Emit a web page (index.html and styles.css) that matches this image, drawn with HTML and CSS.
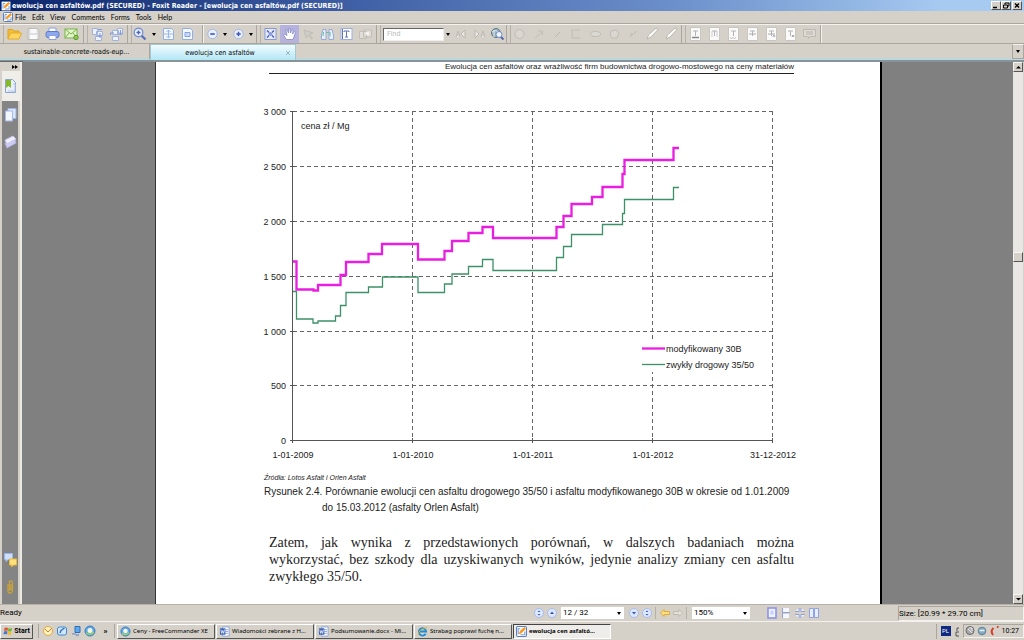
FILE: index.html
```html
<!DOCTYPE html>
<html lang="pl">
<head>
<meta charset="utf-8">
<title>ewolucja cen asfaltów.pdf (SECURED) - Foxit Reader</title>
<link rel="stylesheet" href="styles.css">
</head>
<body>
<svg class="defs" aria-hidden="true">
  <symbol id="foxit" viewBox="0 0 10 10"><rect x=".5" y=".5" width="9" height="9" rx="1" fill="#fff" stroke="#5f7fc0"/><path d="M2 7.500V2.500h2M4 8h4V5" fill="none" stroke="#7d9fdc"/><path d="M2.500 7.500l1-3 4-3.500 1.500 1.500-4 4z" fill="#f59a23"/></symbol>
  <symbol id="folder" viewBox="0 0 15 14"><path d="M1 12V2.500h4.500L7 4h5v2" fill="#f0bf3c" stroke="#dfa21d"/><path d="M1 12L3.500 6H14.500L12 12z" fill="#ffd75e" stroke="#e5aa28"/></symbol>
  <symbol id="save" viewBox="0 0 15 14"><path d="M2 1.500h9l2 2v9H2z" fill="#dedede" stroke="#bdbdbd"/><path d="M4.500 2h6v4h-6zM4 8h7v4H4z" fill="#fafafa"/></symbol>
  <symbol id="print" viewBox="0 0 15 14"><path d="M4 1h7v4H4z" fill="#fff" stroke="#8aa0e0"/><rect x="1" y="4.500" width="13" height="6" rx="2" fill="#8ca8ee" stroke="#5c79cf"/><path d="M4 8.500h7v4H4z" fill="#fff" stroke="#8aa0e0"/></symbol>
  <symbol id="mail" viewBox="0 0 15 14"><rect x="1" y="2" width="12" height="9" fill="#e3f4cc" stroke="#78b348"/><path d="M1 2l6 5 6-5M1 11l4-5M13 11L9 6" fill="none" stroke="#78b348"/><circle cx="12" cy="10.500" r="2.200" fill="#8fc84f" stroke="#5e9a31"/></symbol>
  <symbol id="docs1" viewBox="0 0 15 14"><path d="M2.500 1.500h5v6h-5zM6.500 4.500h6v4h-6zM5.500 9.500h6v4h-6z" fill="#eef2fd" stroke="#a2b2de"/><path d="M8 2.500h4M10 6v4M8.500 8.500l1.500 2 1.500-2" fill="none" stroke="#8299d8"/></symbol>
  <symbol id="docs2" viewBox="0 0 15 14"><path d="M8.500 1.500h5v6h-5zM3.500 3.500h6v4h-6zM3.500 9.500h6v4h-6z" fill="#eef2fd" stroke="#a2b2de"/><path d="M1.500 8V6H5M11.500 3v4M10 5.500l1.500 2 1.500-2" fill="none" stroke="#8299d8"/></symbol>
  <symbol id="zoom" viewBox="0 0 15 14"><path d="M9 8l4.500 4.500" stroke="#5b6fb8" stroke-width="2.200"/><circle cx="6.500" cy="5.500" r="4.300" fill="#eef5ff" stroke="#7b93d6" stroke-width="1.400"/><path d="M6.500 3.500v4M4.500 5.500h4" stroke="#4a63b8" stroke-width="1.400"/></symbol>
  <symbol id="pageA" viewBox="0 0 15 14"><path d="M2.500 1.500h8l2 2v9h-10z" fill="#f3f8ff" stroke="#93aee3"/><path d="M7.500 3v8M5.500 5l2-2 2 2M5.500 9l2 2 2-2M3 7h9" fill="none" stroke="#9ab4e8"/></symbol>
  <symbol id="pageB" viewBox="0 0 15 14"><path d="M2.500 1.500h8l2 2v9h-10z" fill="#f3f8ff" stroke="#93aee3"/><path d="M5 5.500h5v4H5z" fill="#c9daf8" stroke="#86a2de"/></symbol>
  <symbol id="minus" viewBox="0 0 15 14"><circle cx="7.500" cy="7" r="4.700" fill="#e9f0ff" stroke="#a3b5e4"/><path d="M5.300 7h4.400" stroke="#4054b4" stroke-width="1.600"/></symbol>
  <symbol id="plus" viewBox="0 0 15 14"><circle cx="7.500" cy="7" r="4.700" fill="#e9f0ff" stroke="#a3b5e4"/><path d="M5.300 7h4.400M7.500 4.800v4.400" stroke="#4054b4" stroke-width="1.500"/></symbol>
  <symbol id="fit" viewBox="0 0 15 14"><rect x="2" y="1.500" width="11" height="11" fill="#e6ebfc" stroke="#8a99d6"/><path d="M4 3.500l2 2M11 3.500l-2 2M4 10.500l2-2M11 10.500l-2-2" stroke="#4a5cae" stroke-width="1.300"/><circle cx="7.500" cy="7" r="2" fill="#8b9be0"/></symbol>
  <symbol id="hand" viewBox="0 0 15 14"><path d="M4.500 12.500L1.500 8l1-1L5 8.500 3.800 3l1.200-.5L6.500 6 6.700 1.500h1.300L8.500 6l1.500-4 1.200.5L10.500 7l2-2.500 1 .8L11 12.500z" fill="#fff" stroke="#8588c8" stroke-width=".8"/></symbol>
  <symbol id="arrow" viewBox="0 0 15 14"><path d="M3 3l9 3-3.500 1.500 3 4-1 .8-3-4L5 11z" fill="#cfccc5" stroke="#c1bdb6"/></symbol>
  <symbol id="binoc" viewBox="0 0 15 14"><path d="M3 2.500h3v10H1.500V8zM9 2.500h3L13.500 8v4.500H9z" fill="#e4efff" stroke="#96aada"/><path d="M3.500 5L3 9M10 5v4M6 5.500h3" stroke="#6dbd9d"/></symbol>
  <symbol id="textsel" viewBox="0 0 15 14"><rect x="2" y="1.500" width="11" height="11" fill="#fff" stroke="#9dafe4"/><path d="M5 5V4h5v1M7.500 4v6M6 10h3M3.500 2v10" fill="none" stroke="#6473b4"/></symbol>
  <symbol id="camera" viewBox="0 0 15 14"><path d="M1.500 4.500h7v7h-7zM5.500 3h8v7h-8z" fill="#e1ded8" stroke="#c2beb7"/><circle cx="9.500" cy="6.500" r="1.800" fill="#f4f3f0"/></symbol>
  <symbol id="prev" viewBox="0 0 15 14"><path d="M2 10l2-6 2 6M2.500 8h3M11 3v8L7 7z" fill="#eae8e4" stroke="#bdb9b1"/></symbol>
  <symbol id="next" viewBox="0 0 15 14"><path d="M9 10l2-6 2 6M9.500 8h3M3 3v8l4-4z" fill="#eae8e4" stroke="#bdb9b1"/></symbol>
  <symbol id="search" viewBox="0 0 15 14"><circle cx="6" cy="6" r="4.500" fill="#9cb2bd" stroke="#5e7785"/><path d="M2 5q3-3 7 0M4 10V3" stroke="#dfeaf0" fill="none"/><path d="M10.500 9.500l3 3" stroke="#5269b0" stroke-width="2"/><circle cx="9" cy="7.500" r="3" fill="#f0f6ff" stroke="#6f8ac8"/></symbol>
  <symbol id="gcirc" viewBox="0 0 15 14"><circle cx="7.500" cy="7" r="4.500" fill="#dad7d0" stroke="#c0bcb4"/></symbol>
  <symbol id="garrow" viewBox="0 0 15 14"><path d="M4 11l7-6M7 4h4.500v4" fill="none" stroke="#c2beb6"/></symbol>
  <symbol id="gline" viewBox="0 0 15 14"><path d="M5 10l5-5" stroke="#bcb8b0"/></symbol>
  <symbol id="grect" viewBox="0 0 15 14"><path d="M11 3H3v8h8" fill="none" stroke="#c0bcb4"/></symbol>
  <symbol id="gell" viewBox="0 0 15 14"><ellipse cx="7.500" cy="7" rx="5" ry="2.500" fill="#dcd9d3" stroke="#c0bcb4"/></symbol>
  <symbol id="gpoly" viewBox="0 0 15 14"><path d="M4 4l5-1 3 3-2 5H5L3 8z" fill="#dad7d0" stroke="#c0bcb4"/></symbol>
  <symbol id="gwave" viewBox="0 0 15 14"><path d="M4 10l3-3H4M8 7l3-3" fill="none" stroke="#bcb8b0"/></symbol>
  <symbol id="pencil" viewBox="0 0 15 14"><path d="M2 12l1.500-4L11 1l2 1.500L6 10z" fill="#fbfbfa" stroke="#bab6af"/></symbol>
  <symbol id="tpage" viewBox="0 0 15 14"><path d="M2.500 .5h10v13h-10z" fill="#fafafa" stroke="#c9c6c0"/><path d="M5 4h5M7.500 4v5" stroke="#b4b4b4"/></symbol>
  <symbol id="note" viewBox="0 0 15 14"><path d="M1.500 2.500h12v7h-5l-2 2v-2h-5z" fill="#dedbd5" stroke="#bdb9b1"/><path d="M4 5h7M4 7h7" stroke="#b8b4ac"/></symbol>
  <symbol id="word" viewBox="0 0 12 12"><path d="M4 1h7v10H4z" fill="#fff" stroke="#8aa3d8"/><path d="M7 4h3M7 6h3M7 8h3" stroke="#8aa3d8"/><path d="M1 2.500h6v7H1z" fill="#3e64b8"/><path d="M2 4l1 4 1-3 1 3 1-4" fill="none" stroke="#fff" stroke-width=".8"/></symbol>
  <symbol id="commander" viewBox="0 0 12 12"><circle cx="6" cy="6" r="5" fill="#5ea7e8" stroke="#3b7cc6"/><path d="M2 8q4 3 8-1" fill="none" stroke="#9fd35b" stroke-width="1.500"/><circle cx="6" cy="5.500" r="2.500" fill="#f4f8e0"/></symbol>
  <symbol id="ie" viewBox="0 0 12 12"><path d="M9.500 8.500A4 4 0 1 1 10 6H3" fill="none" stroke="#1c8bd8" stroke-width="2"/><path d="M1 10Q2 3 11 1.500" fill="none" stroke="#efb31f"/></symbol>
  <symbol id="ends" viewBox="0 0 12 12"><circle cx="6" cy="6" r="4.500" fill="#dce8ff" stroke="#a9bcec"/><path d="M4.500 5L6 3.500 7.500 5zM4.500 7L6 8.500 7.500 7z" fill="#3c56b8"/></symbol>
  <symbol id="up" viewBox="0 0 12 12"><circle cx="6" cy="6" r="4.500" fill="#dce8ff" stroke="#a9bcec"/><path d="M4 7l2-2.500L8 7z" fill="#3c56b8"/></symbol>
  <symbol id="down" viewBox="0 0 12 12"><circle cx="6" cy="6" r="4.500" fill="#dce8ff" stroke="#a9bcec"/><path d="M4 5l2 2.500L8 5z" fill="#3c56b8"/></symbol>
</svg>

<header class="titlebar">
  <svg class="ic10"><use href="#foxit"/></svg>
  <h1 class="title">ewolucja cen asfaltów.pdf (SECURED) - Foxit Reader - [ewolucja cen asfaltów.pdf (SECURED)]</h1>
  <button class="winbtn" aria-label="Minimize"><svg viewBox="0 0 8 7"><path d="M1 5.500h4" stroke="#000" stroke-width="1.500"/></svg></button>
  <button class="winbtn" aria-label="Restore"><svg viewBox="0 0 8 7"><path d="M3 2.500v-1.500h4v3H5.500M1.500 3h4v3h-4z" fill="none" stroke="#000"/></svg></button>
  <button class="winbtn last" aria-label="Close"><svg viewBox="0 0 8 7"><path d="M2 1.500l4 4M6 1.500l-4 4" stroke="#000" stroke-width="1.300"/></svg></button>
</header>

<nav class="menubar">
  <svg class="ic10"><use href="#foxit"/></svg>
  <button>File</button><button>Edit</button><button>View</button><button>Comments</button><button>Forms</button><button>Tools</button><button>Help</button>
</nav>

<div class="toolbar">
  <div class="group">
    <button class="tool" aria-label="Open"><svg><use href="#folder"/></svg></button><button class="tool" aria-label="Save"><svg><use href="#save"/></svg></button><button class="tool" aria-label="Print"><svg><use href="#print"/></svg></button><button class="tool" aria-label="Email"><svg><use href="#mail"/></svg></button>
  </div>
  <div class="group">
    <button class="tool" aria-label="Rotate left"><svg><use href="#docs1"/></svg></button><button class="tool" aria-label="Rotate right"><svg><use href="#docs2"/></svg></button>
  </div>
  <div class="group wide">
    <button class="tool" aria-label="Zoom"><svg><use href="#zoom"/></svg></button><button class="drop" aria-label="Zoom options"></button><button class="tool" aria-label="Fit page"><svg><use href="#pageA"/></svg></button><button class="tool" aria-label="Actual size"><svg><use href="#pageB"/></svg></button>
  </div>
  <div class="group plain">
    <button class="tool slim" aria-label="Zoom out"><svg><use href="#minus"/></svg></button><button class="drop" aria-label="Zoom out options"></button><button class="tool slim" aria-label="Zoom in"><svg><use href="#plus"/></svg></button><button class="drop" aria-label="Zoom in options"></button>
  </div>
  <div class="group">
    <button class="tool" aria-label="Full screen"><svg><use href="#fit"/></svg></button><button class="tool active" aria-label="Hand"><svg><use href="#hand"/></svg></button><button class="tool" aria-label="Select"><svg><use href="#arrow"/></svg></button><button class="tool" aria-label="Search panel"><svg><use href="#binoc"/></svg></button><button class="tool" aria-label="Select text"><svg><use href="#textsel"/></svg></button><button class="tool" aria-label="Snapshot"><svg><use href="#camera"/></svg></button>
  </div>
  <div class="group finder">
    <input class="find" type="text" placeholder="Find" aria-label="Find"><button class="drop" aria-label="Find options"></button><button class="tool mid" aria-label="Find previous"><svg><use href="#prev"/></svg></button><button class="tool mid" aria-label="Find next"><svg><use href="#next"/></svg></button><button class="tool mid" aria-label="Search"><svg><use href="#search"/></svg></button>
  </div>
  <div class="group drawing">
    <button class="tool" aria-label="Cloud"><svg><use href="#gcirc"/></svg></button><button class="tool" aria-label="Arrow"><svg><use href="#garrow"/></svg></button><button class="tool" aria-label="Line"><svg><use href="#gline"/></svg></button><button class="tool" aria-label="Rectangle"><svg><use href="#grect"/></svg></button><button class="tool" aria-label="Ellipse"><svg><use href="#gell"/></svg></button><button class="tool" aria-label="Polygon"><svg><use href="#gpoly"/></svg></button><button class="tool" aria-label="Polyline"><svg><use href="#gwave"/></svg></button><button class="tool" aria-label="Pencil"><svg><use href="#pencil"/></svg></button><button class="tool" aria-label="Eraser"><svg><use href="#pencil"/></svg></button>
  </div>
  <div class="group">
    <button class="tool" aria-label="Underline"><svg viewBox="0 0 15 14"><use href="#tpage"/><path d="M4 10.500h7" stroke="#888" stroke-width="1.500"/></svg></button><button class="tool" aria-label="Highlight"><svg viewBox="0 0 15 14"><use href="#tpage"/><path d="M5 4v6M10 4v6" stroke="#ccc"/></svg></button><button class="tool" aria-label="Squiggly"><svg viewBox="0 0 15 14"><use href="#tpage"/><path d="M4 10.500l1.500 1 1.500-1 1.500 1 1.500-1" fill="none" stroke="#bbb"/></svg></button><button class="tool" aria-label="Strikeout"><svg viewBox="0 0 15 14"><use href="#tpage"/><path d="M4 7h7" stroke="#aaa"/></svg></button><button class="tool" aria-label="Replace"><svg viewBox="0 0 15 14"><use href="#tpage"/><path d="M4 7h7M9 10l1-2 1 2" fill="none" stroke="#aaa"/></svg></button><button class="tool" aria-label="Insert"><svg viewBox="0 0 15 14"><use href="#tpage"/><path d="M9 10l1-2 1 2" fill="none" stroke="#999"/></svg></button><button class="tool" aria-label="Note"><svg><use href="#note"/></svg></button>
  </div>
</div>

<div class="tabs" role="tablist">
  <button class="tab" role="tab">sustainable-concrete-roads-eup...</button>
  <button class="tab current" role="tab" aria-selected="true"><span>ewolucja cen asfaltów</span><svg viewBox="0 0 6 6"><path d="M1 1l4 4M5 1L1 5" stroke="#9bb3c0"/></svg></button>
  <button class="tablist" aria-label="Tab list"></button>
</div>

<main class="work">
  <aside class="rail">
    <div class="railhead">
      <button class="expand" aria-label="Expand"><svg viewBox="0 0 8 6"><path d="M1 1l3 2-3 2zM4 1l3 2-3 2z"/></svg></button>
      <button class="panel" aria-label="Bookmarks"><svg viewBox="0 0 13 16"><path d="M1.500 1.500h7l3 3v10h-10z" fill="#e9f0fc" stroke="#8fa5d0"/><path d="M2 2h5v8l-2.500-2L2 10z" fill="#84b92b"/><path d="M9 6h2v7H4" fill="none" stroke="#b4c6e6"/></svg></button>
    </div>
    <button class="panel" aria-label="Pages"><svg viewBox="0 0 13 16"><path d="M4 1.500h8v10H4z" fill="#dbe7ff" stroke="#9fb5e4"/><path d="M1.500 4h7v10h-7z" fill="#f2f6ff" stroke="#a5b9e4"/></svg></button>
    <button class="panel" aria-label="Layers"><svg viewBox="0 0 13 16"><path d="M1 9l10-4 1 4-9 5z" fill="#cfcdf2" stroke="#b3b0e0"/><path d="M1 6l8-4 3 3-9 5z" fill="#f0effd" stroke="#c4c2ea"/></svg></button>
    <span class="spacer"></span>
    <button class="panel" aria-label="Comments"><svg viewBox="0 0 13 16"><path d="M.5 1.500h8v6H4l-2 2v-2H.500z" fill="#cfe0ff" stroke="#9ab5ec"/><path d="M5.500 7h7v6h-3l-2 2v-2h-2z" fill="#ffe07a" stroke="#eab83a"/></svg></button>
    <button class="panel" aria-label="Attachments"><svg viewBox="0 0 13 16"><path d="M4 5v7q0 2 2 2t2.500-2V4Q8.500 2 6.500 2T5.500 4v7h1.500V5" fill="none" stroke="#c6a13c" stroke-width="1.300"/></svg></button>
  </aside>

  <section class="viewport">
    <article class="page">
      <p class="running">Ewolucja cen asfaltów oraz wrażliwość firm budownictwa drogowo-mostowego na ceny materiałów</p>
      <svg class="chart" viewBox="262 100 538 366" role="img" aria-label="Ceny asfaltu">
        <g class="grid">
          <path d="M293 111.500H773M293 166.500H773M293 221.500H773M293 276.500H773M293 331.500H773M293 385.500H773"/>
          <path d="M412.500 111V440M532.500 111V440M652.500 111V440M772.500 111V440"/>
        </g>
        <rect x="640" y="341" width="126" height="31" fill="#fff"/>
        <path class="axis" d="M292.500 111V443M290 440.500H773M290 111.500h5M290 166.500h5M290 221.500h5M290 276.500h5M290 331.500h5M290 385.500h5M412.500 438v5M532.500 438v5M652.500 438v5M772.500 438v5"/>
        <path class="basic" d="M293 291.500H296.500V319H313V323H318V321H335.500V316H340.500V305.500H346V292.500H368.500V287H382.500V277H418V292.500H444.500V284H452V274H468.500V266.500H482.500V259.500H493V270.500H556.500V257.500H563.500V246.500H571.500V234.500H602.500V224.500H622.500V213.500H624.500V199.500H673.500V187.500H679"/>
        <path class="modified" d="M293 261.500H296.500V289.500H313.500V290.500H318V285H340.500V275H346V262H368.500V254H382V244H418V259.500H444.500V251H452V241H468.500V233H482.500V227H493V238H556.500V227H563.500V216H571.500V204H592V197H602.500V187H622.500V174H624.500V160H673.500V148H679"/>
        <path class="modified" d="M642 348.500h23"/>
        <path class="basic" d="M642 364.500h23"/>
        <g class="label">
          <text x="301" y="129">cena zł / Mg</text>
          <text x="666" y="352">modyfikowany 30B</text>
          <text x="666" y="368">zwykły drogowy 35/50</text>
        </g>
        <g class="label end">
          <text x="286" y="115">3 000</text><text x="286" y="170">2 500</text><text x="286" y="225">2 000</text><text x="286" y="280">1 500</text><text x="286" y="335">1 000</text><text x="286" y="389">500</text><text x="286" y="444">0</text>
        </g>
        <g class="label middle">
          <text x="293" y="458">1-01-2009</text><text x="413" y="458">1-01-2010</text><text x="533" y="458">1-01-2011</text><text x="653" y="458">1-01-2012</text><text x="773" y="458">31-12-2012</text>
        </g>
      </svg>
      <p class="source">Źródła: Lotos Asfalt i Orlen Asfalt</p>
      <p class="caption">Rysunek 2.4. Porównanie ewolucji cen asfaltu drogowego 35/50 i asfaltu modyfikowanego 30B w okresie od 1.01.2009 <span class="cont">do 15.03.2012 (asfalty Orlen Asfalt)</span></p>
      <p class="body">Zatem, jak wynika z przedstawionych porównań, w dalszych badaniach można<br>wykorzystać, bez szkody dla uzyskiwanych wyników, jedynie analizy zmiany cen asfaltu <span class="tail">zwykłego 35/50.</span></p>
    </article>
  </section>

  <div class="scroll">
    <button class="sbtn" aria-label="Scroll up"><svg viewBox="0 0 7 6"><path d="M1 4.500h5L3.500 2z"/></svg></button>
    <span class="track"></span>
    <button class="sbtn thumb" aria-label="Scroll position"></button>
    <span class="track low"></span>
    <button class="sbtn" aria-label="Scroll down"><svg viewBox="0 0 7 6"><path d="M1 2h5L3.500 4.500z"/></svg></button>
  </div>
</main>

<footer class="status">
  <span class="ready">Ready</span>
  <div class="pager">
    <button class="nav" aria-label="First page"><svg><use href="#ends"/></svg></button><button class="nav" aria-label="Previous page"><svg><use href="#up"/></svg></button>
    <span class="pick"><select class="num" aria-label="Page"><option>12 / 32</option></select></span>
    <button class="nav" aria-label="Next page"><svg><use href="#down"/></svg></button><button class="nav" aria-label="Last page"><svg><use href="#ends"/></svg></button>
    <span class="sep"></span>
    <button class="nav" aria-label="Back"><svg viewBox="0 0 12 12"><path d="M1.500 6L5 2.500v2h5.500v3H5v2z" fill="#ffdf7e" stroke="#dfac38"/></svg></button><button class="nav" aria-label="Forward"><svg viewBox="0 0 12 12"><path d="M10.500 6L7 2.500v2H1.500v3H7v2z" fill="#e4e1db" stroke="#bebab2"/></svg></button>
    <span class="sep"></span>
    <span class="pick"><select class="pct" aria-label="Zoom level"><option>150%</option></select></span>
  </div>
  <div class="layouts">
    <button class="nav" aria-label="Single page"><svg viewBox="0 0 12 12"><path d="M2 1h8v10H2z" fill="#eef3ff" stroke="#8b8fe4" stroke-width="1.500"/><path d="M4.500 3.500h3v4h-3z" fill="#c3d1fa"/></svg></button><button class="nav" aria-label="Continuous"><svg viewBox="0 0 12 12"><path d="M3 1h6v4H3zM3 7h6v4H3z" fill="#f4f7ff"/><path d="M2.500 1v10M3 5.500h7" fill="none" stroke="#93a2de"/></svg></button><button class="nav" aria-label="Continuous facing"><svg viewBox="0 0 12 12"><path d="M1 4.500h4V1M11 4.500H7V1M1 7.500h4V11M11 7.500H7V11" fill="#f4f7ff" stroke="#93a2de"/></svg></button><button class="nav" aria-label="Facing"><svg viewBox="0 0 12 12"><path d="M1.500 1.500h4v9h-4zM6.500 1.500h4v9h-4z" fill="#e4efff" stroke="#93a2de"/></svg></button>
  </div>
  <span class="size">Size: [20.99 * 29.70 cm]</span>
</footer>

<footer class="taskbar">
  <button class="start"><svg viewBox="0 0 10 10"><path d="M1.500 2q2-1 3.500 0L4.500 5Q3 4 1 5z" fill="#e8542c"/><path d="M5.500 2q2 1 3.500 0L8.500 5q-2 1-3.500 0z" fill="#6fb52e"/><path d="M1 5.500q2-1 3.500 0L4 8.500q-2-1-3.500 0z" fill="#3f78d8"/><path d="M5 5.500q2 1 3.500 0L8 8.500q-2 1-3.500 0z" fill="#f5bd28"/></svg>Start</button>
  <div class="quick">
    <button class="nav" aria-label="Outlook"><svg viewBox="0 0 12 12"><circle cx="6" cy="6" r="4.500" fill="#fff1c0" stroke="#e5a83a"/><path d="M3 4l3 3 4-4" fill="none" stroke="#d37f22"/></svg></button>
    <button class="nav" aria-label="Desktop"><svg viewBox="0 0 12 12"><rect x="1.500" y="2" width="9" height="8" rx="2" fill="#cfe6ff" stroke="#4188cf"/><path d="M4 8l1-2.500L8.500 3" fill="none" stroke="#3a78bd" stroke-width="1.500"/></svg></button>
    <button class="nav" aria-label="Network"><svg viewBox="0 0 12 12"><path d="M5 1.500h5v6H5z" fill="#5baaf0" stroke="#2f6db8"/><path d="M2 9q3-1 5 1.500l2-1" fill="none" stroke="#8d9dc8" stroke-width="1.500"/></svg></button>
    <button class="nav" aria-label="FreeCommander"><svg><use href="#commander"/></svg></button>
    <button class="more" aria-label="More">»</button>
  </div>
  <div class="tasks">
    <button class="task"><svg><use href="#commander"/></svg><span>Ceny - FreeCommander XE</span></button>
    <button class="task"><svg><use href="#word"/></svg><span>Wiadomości zebrane z H...</span></button>
    <button class="task"><svg><use href="#word"/></svg><span>Podsumowanie.docx - Mi...</span></button>
    <button class="task"><svg><use href="#ie"/></svg><span>Strabag poprawi fuchę n...</span></button>
    <button class="task on"><svg><use href="#foxit"/></svg><span>ewolucja cen asfaltó...</span></button>
  </div>
  <div class="tray">
    <span class="lang">PL</span>
    <svg viewBox="0 0 8 12"><path d="M6 3H4v3M6 7H3v4h3" fill="none" stroke="#555"/></svg>
    <div class="notify">
      <svg viewBox="0 0 12 12"><circle cx="6" cy="5.500" r="4" fill="#a9a9ad" stroke="#68686e"/><path d="M4 4l4 4M5 3h3v3" stroke="#eee" fill="none"/></svg>
      <svg viewBox="0 0 12 12"><circle cx="6" cy="6" r="3.800" fill="#87aac0" stroke="#5f8198"/><path d="M3.500 5.500h5" stroke="#e6f1f5" stroke-width="1.500"/></svg>
      <svg viewBox="0 0 12 12"><path d="M5.500 3Q2 6 5 10M9 1.500l1.500 1" fill="none" stroke="#dc3a24" stroke-width="2"/></svg>
      <time>10:27</time>
    </div>
  </div>
</footer>
</body>
</html>
```
FILE: styles.css
```css
* { box-sizing: border-box; }
body {
  margin: 0;
  height: 100vh;
  display: flex;
  flex-direction: column;
  overflow: hidden;
  background: #d5d1c9;
  color: #000;
  font: 7px/10px Roboto, "Liberation Sans", sans-serif;
}
button, input, select { margin: 0; padding: 0; border: 0; border-radius: 0; background: none; color: inherit; font: inherit; }
button { display: flex; align-items: center; justify-content: center; flex: none; }
h1, p { margin: 0; }
svg { display: block; flex: none; }
.defs { position: absolute; width: 0; height: 0; }
.ic10 { width: 10px; height: 10px; }

.titlebar {
  flex: none;
  height: 11px;
  display: flex;
  align-items: center;
  padding: 0 2px 0 1px;
  background: linear-gradient(90deg, #0a246a, #3f5fa4 34%, #6c90cb 66%, #a6caf0 92%);
  color: #fff;
}
.title { flex: 1; margin-left: 1px; font: bold 7px/10px "DejaVu Sans Condensed", "Noto Sans", sans-serif; white-space: nowrap; }
.winbtn { width: 10px; height: 9px; background: #d5d1c9; border: 1px solid; border-color: #fff #555 #555 #fff; }
.winbtn svg { width: 8px; height: 7px; }
.last { margin-left: 1px; }

.menubar { flex: none; height: 13px; display: flex; align-items: center; padding-left: 3px; border-bottom: 1px solid #aaa69e; gap: 6px; font-family: Lato, Roboto, sans-serif; }
.menubar .ic10 { margin-right: -4px; }

.toolbar { flex: none; height: 20px; display: flex; border-top: 1px solid #f4f2ee; border-bottom: 1px solid #aaa69e; overflow: hidden; }
.group { display: flex; align-items: center; padding: 0 2px 0 5px; border-right: 1px solid #aaa69e; box-shadow: 1px 0 #f4f2ee, inset 3px 0 #d5d1c9, inset 4px 0 #b5b1a9; }
.group + .group { padding: 0 1px 0 4px; }
.group + .wide { padding: 0 5px 0 2px; }
.group + .plain { padding: 0 0 0 1px; box-shadow: 1px 0 #f4f2ee; }
.group + .finder { padding: 0 0 0 6px; }
.finder .drop { width: 8px; }
.group + .drawing { padding: 0 0 0 3px; }
.tool { width: 19px; height: 18px; }
.tool svg { width: 15px; height: 14px; }
.slim { width: 16px; }
.mid { width: 18px; }
.active { background: #b5b3de; }
.drop { width: 10px; height: 18px; }
.drop::after, .tablist::after, .pick::after { content: ""; border: 2px solid transparent; border-top: 3px solid #000; border-bottom: 0; }
.find { width: 61px; height: 13px; padding-left: 3px; background: #fff; border: 1px solid; border-color: #666 #eee #eee #666; }
.find::placeholder { color: #bbb; opacity: 1; }

.tabs { flex: none; height: 18px; display: flex; padding-left: 4px; background: #d5d1c9; border-bottom: 2px solid #87959a; box-shadow: inset 0 -2px #bcd8dc; font-family: "DejaVu Sans Condensed", "Noto Sans", sans-serif; }
.tab { width: 146px; height: 15px; border-right: 1px solid #aaa69e; }
.tab.current { height: 16px; position: relative; background: linear-gradient(#f2fcff, #b3e6f5); border: 1px solid #a5c9d3; border-bottom: 0; padding-right: 6px; }
.tab svg { position: absolute; right: 4px; width: 6px; height: 6px; }
.tablist { width: 12px; height: 15px; margin-left: auto; border: 1px solid #b5b1a9; border-color: #f4f2ee #aaa69e #aaa69e; }

.work { flex: 1; min-height: 0; display: flex; }
.rail { flex: none; width: 22px; display: flex; flex-direction: column; background: #848484; border-left: 2px solid #d5d1c9; border-right: 2px solid #ece9e2; outline: 1px solid #666; box-shadow: inset -2px 0 #d5d1c9; padding-bottom: 4px; }
.railhead { background: #f0eee9; height: 39px; flex: none; }
.expand { width: 18px; height: 9px; padding-left: 8px; background: #d5d1c9; }
.expand svg { width: 8px; height: 6px; }
.panel { width: 16px; height: 27px; }
.railhead .panel { height: 30px; }
.panel svg { width: 13px; height: 16px; }
.spacer { flex: 1; }

.viewport { flex: 1; min-width: 0; display: flex; justify-content: center; padding-left: 2px; background: #808080; overflow: hidden; }
.page { width: 727px; flex: 0 1 auto; background: #fff; border-left: 1px solid #333; border-right: 2px solid #000; padding: 0 80px 0 106px; color: #222; font-family: "Liberation Sans", sans-serif; }
.running { margin: 0 6px 0 7px; padding-bottom: 2px; border-bottom: 1px solid #222; font-size: 8px; line-height: 9px; text-align: right; white-space: nowrap; }
.chart { width: 538px; height: 366px; margin-top: 26px; }
.grid { fill: none; stroke: #666; stroke-dasharray: 4 3; }
.axis { fill: none; stroke: #555; }
.basic { fill: none; stroke: #3d9168; stroke-width: 1.300; }
.modified { fill: none; stroke: #e81ee0; stroke-width: 2.300; }
.label { font: 9px "Liberation Sans", sans-serif; fill: #222; }
.end { text-anchor: end; }
.middle { text-anchor: middle; }
.source { margin: 6px 0 0 2px; font-size: 7px; line-height: 11px; font-style: italic; }
.caption { margin: 1px 0 0 2px; font-size: 10px; line-height: 16px; white-space: nowrap; }
.cont { display: block; padding-left: 58px; }
.body { margin: 18px 6px 0 7px; font: 14px/17px "Liberation Serif", serif; text-align: justify; text-align-last: justify; }
.tail { display: block; text-align-last: left; }

.scroll { flex: none; width: 11px; display: flex; flex-direction: column; background: #e9e7e3; border-right: 1px solid #d5d1c9; }
.sbtn { width: 10px; height: 10px; background: #d5d1c9; border: 1px solid; border-color: #f7f5f1 #555 #555 #f7f5f1; }
.sbtn svg { width: 7px; height: 6px; }
.track { flex: 180; }
.low { flex: 333; }

.status { flex: none; height: 18px; display: flex; align-items: center; border-top: 1px solid #b5b1a9; border-bottom: 1px solid #f4f2ee; font-size: 8px; }
.ready { flex: 1; }
.pager { display: flex; align-items: center; margin-right: 12px; }
.nav { width: 14px; height: 14px; }
.nav svg { width: 12px; height: 12px; }
.pager .nav { width: 13px; }
.pick { position: relative; margin: 0 3px; }
.pick::after { position: absolute; right: 3px; top: 5px; pointer-events: none; }
.pick select { display: block; appearance: none; height: 12px; padding-left: 2px; background: #fff; font-size: 8px; line-height: 12px; }
.num { width: 63px; }
.pct { width: 58px; }
.sep { width: 1px; height: 12px; margin: 0 2px; background: #b5b1a9; }
.layouts { display: flex; }
.size { width: 126px; margin-left: 77px; height: 15px; line-height: 14px; border: 1px solid #b5b1a9; border-color: #aaa69e #f4f2ee #f4f2ee #aaa69e; }

.taskbar { flex: none; height: 18px; display: flex; align-items: center; }
.start { width: 33px; height: 15px; font-weight: bold; border: 1px solid; border-color: #fff #555 #555 #fff; gap: 1px; }
.start svg { width: 10px; height: 10px; }
.quick { display: flex; align-items: center; margin: 0 2px 0 5px; padding-left: 2px; border-left: 1px solid #aaa69e; border-right: 1px solid #aaa69e; }
.more { width: 17px; font-weight: bold; font-size: 8px; }
.tasks { display: flex; flex: 1; min-width: 0; gap: 1px; font-family: "Noto Sans", Roboto, sans-serif; font-size: 6px; }
.task { width: 98px; height: 15px; justify-content: flex-start; gap: 2px; padding-left: 2px; border: 1px solid; border-color: #fff #555 #555 #fff; white-space: nowrap; overflow: hidden; }
.task svg { width: 11px; height: 11px; }
.on { font-weight: bold; background: #efede9; border-color: #444 #fff #fff #444; }
.tray { display: flex; align-items: center; height: 15px; padding-left: 4px; border-left: 1px solid #aaa69e; }
.tray svg { width: 12px; height: 12px; }
.lang { width: 10px; line-height: 10px; background: #0f2a80; color: #fff; text-align: center; font-size: 6px; }
.notify { display: flex; align-items: center; height: 14px; padding: 0 4px 0 0; border: 1px solid; border-color: #aaa69e #f4f2ee #f4f2ee #aaa69e; }
.notify time { margin-left: 2px; }
```
